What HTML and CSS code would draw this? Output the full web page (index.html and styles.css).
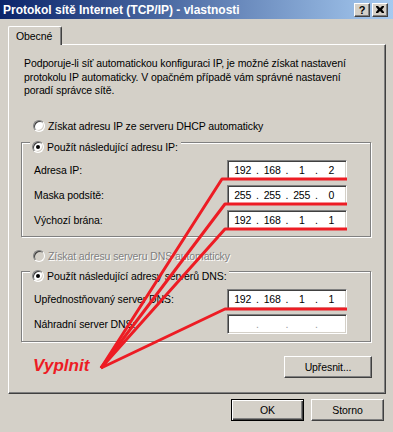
FILE: index.html
```html
<!DOCTYPE html>
<html lang="cs">
<head>
    <meta charset="UTF-8">
    <meta name="viewport" content="width=device-width, initial-scale=1.0">
    <title>Protokol sítě Internet (TCP/IP) - vlastnosti</title>
    <link rel="stylesheet" href="styles.css">
</head>
<body>
    <div class="window">
        <div class="titlebar">
            <span class="title">Protokol sítě Internet (TCP/IP) - vlastnosti</span>
            <div class="caption-btns">
                <span class="cbtn help">?</span>
                <span class="cbtn">
                    <svg width="8" height="7" viewBox="0 0 8 7"><path d="M0 0h2l2 2 2-2h2v1L6 3.5 8 6v1H6L4 5 2 7H0V6l2-2.5L0 1z" fill="#000"/></svg>
                </span>
            </div>
        </div>

        <div class="tabs">
            <div class="tab">Obecné</div>
        </div>

        <div class="panel">
            <p class="intro">Podporuje-li síť automatickou konfiguraci IP, je možné získat nastavení<br>protokolu IP automaticky. V opačném případě vám správné nastavení<br>poradí správce sítě.</p>

            <div class="radio-row first"><span class="radio"></span>Získat adresu IP ze serveru DHCP automaticky</div>

            <div class="group group-ip">
                <div class="legend"><span class="radio checked"></span>Použít následující adresu IP:</div>
                <div class="field-row">
                    <span class="label">Adresa IP:</span>
                    <div class="ipbox"><span class="oct">192</span><i>.</i><span class="oct">168</span><i>.</i><span class="oct">1</span><i>.</i><span class="oct">2</span></div>
                </div>
                <div class="field-row">
                    <span class="label">Maska podsítě:</span>
                    <div class="ipbox"><span class="oct">255</span><i>.</i><span class="oct">255</span><i>.</i><span class="oct">255</span><i>.</i><span class="oct">0</span></div>
                </div>
                <div class="field-row">
                    <span class="label">Výchozí brána:</span>
                    <div class="ipbox"><span class="oct">192</span><i>.</i><span class="oct">168</span><i>.</i><span class="oct">1</span><i>.</i><span class="oct">1</span></div>
                </div>
            </div>

            <div class="radio-row disabled"><span class="radio"></span>Získat adresu serveru DNS automaticky</div>

            <div class="group group-dns">
                <div class="legend"><span class="radio checked"></span>Použít následující adresy serverů DNS:</div>
                <div class="field-row">
                    <span class="label">Upřednostňovaný server DNS:</span>
                    <div class="ipbox"><span class="oct">192</span><i>.</i><span class="oct">168</span><i>.</i><span class="oct">1</span><i>.</i><span class="oct">1</span></div>
                </div>
                <div class="field-row">
                    <span class="label">Náhradní server DNS:</span>
                    <div class="ipbox empty"><span class="oct"></span><i>.</i><span class="oct"></span><i>.</i><span class="oct"></span><i>.</i><span class="oct"></span></div>
                </div>
            </div>

            <div class="actions">
                <button class="btn advanced">Upřesnit...</button>
            </div>
        </div>

        <div class="footer">
            <button class="btn default">OK</button>
            <button class="btn">Storno</button>
        </div>

        <!-- červené čáry k polím -->
        <svg class="marks" width="393" height="432" viewBox="0 0 393 432">
            <g fill="none" stroke="#ed1c24" stroke-width="3" stroke-linejoin="round">
                <polyline points="347,179 222,179 101,368"/>
                <polyline points="347,204 225,204 101,368"/>
                <polyline points="347,229 225,229 101,368"/>
                <polyline points="347,309 225,309 101,368"/>
            </g>
        </svg>
        <div class="note">Vyplnit</div>
    </div>
</body>
</html>
```

FILE: styles.css
```css
body {
    margin: 0;
    background: #d4d0c8;
}
.window {
    position: relative;
    width: 393px;
    height: 432px;
    overflow: hidden;
    background: #d4d0c8;
    font-family: "Liberation Sans", Arial, sans-serif;
    font-size: 10.5px;
    letter-spacing: -0.1px;
    color: #000;
}
.titlebar {
    display: flex;
    align-items: center;
    justify-content: space-between;
    height: 19px;
    padding: 0 5px 0 3px;
    background: linear-gradient(to right, #0a246a, #a6caf0);
}
.title {
    color: #fff;
    font-weight: bold;
    font-size: 12px;
    letter-spacing: 0;
}
.caption-btns {
    display: flex;
    gap: 2px;
}
.cbtn {
    display: flex;
    align-items: center;
    justify-content: center;
    width: 14px;
    height: 12px;
    background: #d4d0c8;
    border: 1px solid;
    border-color: #fff #404040 #404040 #fff;
    box-shadow: inset -1px -1px 0 #808080;
    font-weight: bold;
    font-size: 11px;
}
.tabs {
    display: flex;
    padding: 7px 0 0 8px;
}
.tab {
    position: relative;
    z-index: 1;
    height: 19px;
    width: 54px;
    margin-bottom: -1px;
    padding-left: 7px;
    line-height: 19px;
    background: #d4d0c8;
    border-top: 1px solid #fff;
    border-left: 1px solid #fff;
    border-right: 1px solid #404040;
    box-shadow: inset -1px 0 0 #808080;
    border-radius: 2px 2px 0 0;
    box-sizing: border-box;
}
.panel {
    height: 350px;
    margin: 0 7px 0 8px;
    box-sizing: border-box;
    border-top: 1px solid #fff;
    border-left: 1px solid #fff;
    border-right: 1px solid #404040;
    border-bottom: 1px solid #404040;
    box-shadow: inset -1px -1px 0 #808080;
}
.intro {
    margin: 12px 0 0 15px;
    line-height: 13.5px;
}
.radio-row {
    display: flex;
    align-items: center;
    height: 16px;
    margin: 20px 0 0 24px;
}
.radio-row.disabled {
    margin-top: 11px;
    color: #808080;
    text-shadow: 1px 1px 0 #fff;
}
.radio {
    position: relative;
    width: 12px;
    height: 12px;
    margin-right: 3px;
    box-sizing: border-box;
    border-radius: 50%;
    background: #fff;
    border: 1px solid;
    border-color: #808080 #fff #fff #808080;
    box-shadow: inset 1px 1px 0 #404040, inset -1px -1px 0 #d4d0c8;
    flex: none;
}
.radio-row.disabled .radio {
    background: #d4d0c8;
}
.radio.checked::after {
    content: "";
    position: absolute;
    left: 3px;
    top: 3px;
    width: 4px;
    height: 4px;
    border-radius: 50%;
    background: #000;
}
.group {
    margin: 8px 14px 0 12px;
    padding: 0 23px 6px 12px;
    border: 1px solid #808080;
    box-shadow: inset 1px 1px 0 #fff, 1px 1px 0 #fff;
}
.group-dns {
    margin-top: 7px;
    padding-bottom: 7px;
}
.legend {
    display: inline-flex;
    align-items: center;
    height: 16px;
    margin: -9px 0 0 -4px;
    padding: 0 3px 0 2px;
    background: #d4d0c8;
}
.field-row {
    display: flex;
    align-items: center;
    justify-content: space-between;
    margin-top: 5px;
}
.group-ip .field-row:first-of-type {
    margin-top: 1px;
}
.group-dns .field-row:first-of-type {
    margin-top: 6px;
}
.ipbox {
    display: flex;
    align-items: center;
    width: 120px;
    height: 20px;
    box-sizing: border-box;
    padding: 0 2px;
    background: #fff;
    border: 1px solid;
    border-color: #808080 #fff #fff #808080;
    box-shadow: inset 1px 1px 0 #404040, inset -1px -1px 0 #d4d0c8;
}
.oct {
    flex: 1;
    text-align: center;
}
.ipbox i {
    font-style: normal;
    width: 4px;
    text-align: center;
}
.ipbox.empty i {
    color: #999;
}
.actions {
    display: flex;
    justify-content: flex-end;
    margin: 14px 13px 0 0;
}
.btn {
    height: 22px;
    padding: 0;
    background: #d4d0c8;
    font-family: "Liberation Sans", Arial, sans-serif;
    font-size: 10.5px;
    letter-spacing: -0.1px;
    color: #000;
    border: 1px solid;
    border-color: #fff #404040 #404040 #fff;
    box-shadow: inset -1px -1px 0 #808080;
}
.advanced {
    width: 88px;
}
.footer {
    display: flex;
    justify-content: flex-end;
    gap: 7px;
    margin: 5px 9px 0 0;
}
.footer .btn {
    width: 73px;
}
.btn.default {
    border-color: #000;
    box-shadow: inset 1px 1px 0 #fff, inset -1px -1px 0 #404040, inset -2px -2px 0 #808080;
}
.marks {
    position: absolute;
    left: 0;
    top: 0;
    pointer-events: none;
}
.note {
    position: absolute;
    left: 33px;
    top: 356px;
    color: #ed1c24;
    font-size: 17px;
    font-weight: bold;
    font-style: italic;
    letter-spacing: 0;
}
```
